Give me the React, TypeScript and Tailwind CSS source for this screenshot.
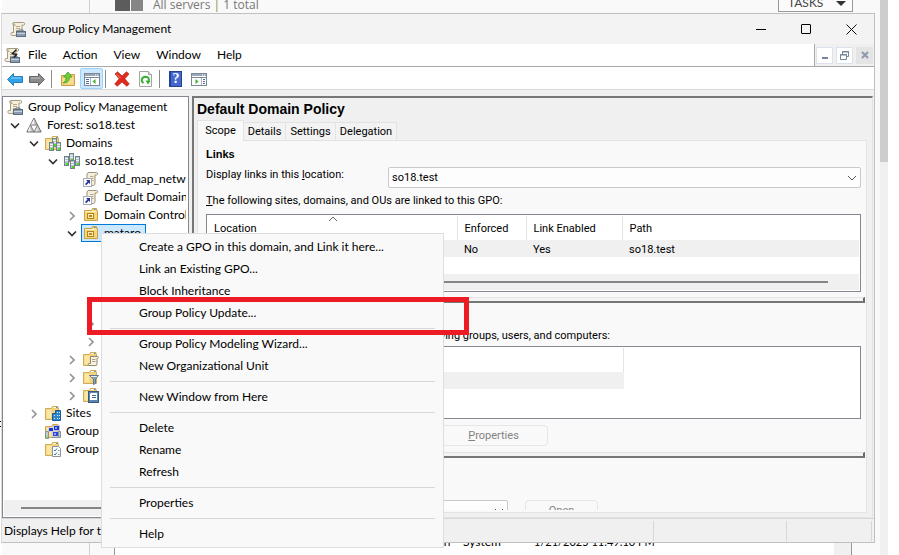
import type { ReactNode } from "react";

const UI = "font-['Lato','Open_Sans',sans-serif]";
const CLASSIC = "font-['Roboto','Liberation_Sans',sans-serif]";
const HEADING = "font-['Liberation_Sans',Arial,sans-serif]";

function Svg({ children, size = "size-4" }: { children: ReactNode; size?: string }) {
  return (
    <svg viewBox="0 0 16 16" className={`${size} shrink-0`} aria-hidden="true">
      {children}
    </svg>
  );
}

function ScrollShape() {
  return (
    <>
      <path d="M4 1.5h9.5c1.4 0 1.8 2.6 0 2.6H12v7.4c0 2-1 3-2.500 3H2.200C.6 14.500.4 11.500 2 11.500h1.500V3z" fill="#f4eedb" stroke="#a39b84" />
      <path d="M4 1.500c-1.800 0-1.800 2.700 0 2.700h1.500" fill="#d9cfae" stroke="#a39b84" />
      <path d="M6 5.500h4M6 7.500h4M6 9.500h3" stroke="#b3aa8c" />
    </>
  );
}

function GpmIcon({ pen = false }: { pen?: boolean }) {
  return (
    <Svg>
      <ScrollShape />
      <rect x="6.500" y="10.500" width="9" height="5" fill="#8b9cb0" stroke="#5d6e81" />
      <path d="M9 10.500V9h4v1.500" fill="none" stroke="#5d6e81" />
      <path d="M7 12.500h8" stroke="#c6d1dc" />
      {pen && <path d="m12.500 2.500-4 4 4 1-2.500 3" fill="none" stroke="#222" strokeWidth="1.500" />}
    </Svg>
  );
}

function ForestIcon() {
  return (
    <Svg>
      <path d="M8 1 .8 15h14.400z" fill="#c4c4c4" stroke="#707070" />
      <path d="M8 2v6H4.700zM4.400 8.500V14.300H1.700z" fill="#f2f2f2" />
      <path d="M11.600 8.500V14.300H9z" fill="#e8e8e8" />
      <path d="M4.400 8h7.200L8 15z" fill="#fafafa" stroke="#7a7a7a" />
    </Svg>
  );
}

function FolderShape() {
  return (
    <>
      <path d="M.5 3.500h6l1-2h5.500v2h.5v11h-13z" fill="#f3d27a" stroke="#cfab55" />
      <path d="M1.500 4.500h5v9h-5z" fill="#fbe6a6" />
      <path d="M8 2.500h4" stroke="#fff8dc" />
      <path d="M11 2.500h1.500" stroke="#4494cf" />
    </>
  );
}

function Tower({ x, y, h }: { x: number; y: number; h: number }) {
  return (
    <>
      <rect x={x + 0.5} y={y + 0.5} width="4" height={h} fill="#b3c2c8" stroke="#71828b" />
      <path d={`M${x + 1} ${y + 2.5}h3M${x + 1} ${y + 4.5}h3`} stroke="#eef3f5" />
      <rect x={x + 2} y={y + h - 2} width="2" height="2" fill="#45e01c" />
    </>
  );
}

function DomainsIcon() {
  return (
    <Svg>
      <FolderShape />
      <Tower x={7} y={3} h={8} />
      <Tower x={4} y={7} h={8} />
      <Tower x={11} y={7} h={8} />
    </Svg>
  );
}

function DomainIcon() {
  return (
    <Svg>
      <Tower x={0} y={3} h={9} />
      <Tower x={11} y={3} h={9} />
      <Tower x={5} y={0} h={8} />
      <Tower x={6} y={7} h={8} />
    </Svg>
  );
}

function GpoLinkIcon() {
  return (
    <Svg>
      <path d="M5 1.500h8.500c1.500 0 1.500 2.500 0 2.500H12v8c0 1.700-1 2.500-2 2.500H4V3z" fill="#f4eedb" stroke="#9b927a" />
      <path d="M7 5.500h3.500M7 7.500h3.500M8 9.500h2.500" stroke="#b3aa8c" />
      <rect x=".5" y="7.500" width="8" height="8" fill="#fff" stroke="#a9adb8" />
      <path d="M3 9h4v4L5.700 11.700 3.200 14.200 2 13l2.500-2.500z" fill="#25359a" />
    </Svg>
  );
}

function OuIcon() {
  return (
    <Svg>
      <path d="M1.500 3.500h7l1-2h4v2h1v10h-13z" fill="#f5d57d" stroke="#c9a248" />
      <path d="M2 4.500h12" stroke="#fff0bd" />
      <path d="M11 2.500h1.500" stroke="#4494cf" />
      <rect x="4.500" y="6.500" width="6" height="5" fill="#fbe9b0" stroke="#b0851f" />
      <rect x="6" y="8" width="3" height="2" fill="#b98a23" />
    </Svg>
  );
}

function GpoFolderIcon() {
  return (
    <Svg>
      <FolderShape />
      <path d="M7.500 5.500h7c1.200 0 1 2 0 2H14v5c0 1.500-.8 2-1.500 2H6c-1.200 0-1-2 0-2h1.500z" fill="#f7f2e2" stroke="#8f8771" />
      <path d="M9 8.500h3.500M9 10.500h3.500" stroke="#aaa184" />
    </Svg>
  );
}

function FilterFolderIcon() {
  return (
    <Svg>
      <FolderShape />
      <path d="M6.500 6.500h9L12.500 10v4.500l-2 1V10z" fill="#8ea6bd" stroke="#5f7790" />
      <path d="M8 7.500h6" stroke="#e3edf5" />
    </Svg>
  );
}

function StarterFolderIcon() {
  return (
    <Svg>
      <FolderShape />
      <rect x="5.500" y="4.500" width="10" height="11" fill="#5b86b3" stroke="#38597f" />
      <path d="M8 6h6v7H7V7z" fill="#fff" />
      <path d="M9 8.500h4M9 10.500h4" stroke="#47688c" />
    </Svg>
  );
}

function SitesIcon() {
  return (
    <Svg>
      <FolderShape />
      <path d="M7.500 8.500h3v-3h5v10h-8z" fill="#2d86c8" stroke="#1a5d96" />
      <path d="M9 10h1v1H9zm0 3h1v1H9zm3-6h1v1h-1zm2 0h1v1h-1zm-2 3h1v1h-1zm2 0h1v1h-1zm-2 3h1v1h-1zm2 0h1v1h-1z" fill="#d6efff" />
    </Svg>
  );
}

function ModelingIcon() {
  return (
    <Svg>
      <FolderShape />
      <rect x="8.500" y="2.500" width="6" height="5" fill="#1e35d6" stroke="#c4c4c4" />
      <rect x="3.500" y="4.500" width="5" height="4" fill="#1e35d6" stroke="#d5d5d5" />
      <rect x="7.500" y="8.500" width="6" height="5" fill="#2a46dd" stroke="#d0d0d0" />
      <path d="M10 4h2v2h-2zM9 10h2v2H9z" fill="#8fa2ff" />
      <path d="M.5 8.500h3v7h-3zM13.500 8.500h2v6h-2zM7 14.500h6" fill="#c5cdd1" stroke="#8a9399" />
      <path d="M1 14h2" stroke="#45e01c" />
    </Svg>
  );
}

function ResultsIcon() {
  return (
    <Svg>
      <FolderShape />
      <path d="M7.500 5.500h6l2 2v8h-8z" fill="#fdfdfd" stroke="#8a929b" />
      <path d="m9 9 1 1 2-2.500M9 13l1 1 2-2.500" fill="none" stroke="#2b78c4" />
      <path d="M13 9.500h1.500M13 13.500h1.500" stroke="#888" />
    </Svg>
  );
}

function ArrowIcon({ forward = false }: { forward?: boolean }) {
  return (
    <Svg>
      {forward ? (
        <path d="M15.500 8.500 9.500 2.500v3h-9v6h9v3z" fill="#8b8b8b" stroke="#666" />
      ) : (
        <path d="m.5 8.500 6-6v3h9v6h-9v3z" fill="#2ea3ea" stroke="#2b7fb8" />
      )}
      <path d={forward ? "M2 7h9" : "M4 7h10"} stroke={forward ? "#c0c0c0" : "#8ed6ff"} />
    </Svg>
  );
}

function UpFolderIcon() {
  return (
    <Svg>
      <path d="M1.500 4.500h6l1-1h6v11h-13z" fill="#f2cd70" stroke="#c9a04a" />
      <path d="M2.500 6.500h11v7h-11z" fill="#f8dc90" />
      <path d="M3 12c2.500-1.500 3-3 3-6H3.500L8 1l4 5H9.500c0 4-2 6-6.500 6z" fill="#6ad03c" stroke="#3a9a20" strokeWidth=".7" />
    </Svg>
  );
}

function PanelIcon({ right = false }: { right?: boolean }) {
  return (
    <Svg>
      <rect x=".5" y="2.500" width="15" height="12" fill="#fff" stroke="#7d8897" />
      <path d="M1 4h14" stroke="#9aa8ba" strokeWidth="2" />
      <path d="M1 6.500h14" stroke="#7d8897" />
      <path d="M11 4h1M13 4h1" stroke="#fff" />
      <path d={right ? "M10.500 7v7" : "M6.500 7v7"} stroke="#aab4c0" />
      <path d={right ? "M12 8.500h2M12 10.500h2M12 12.500h2" : "M2 8.500h3M2 10.500h3M2 12.500h3"} stroke="#4472a8" />
      <path d={right ? "m4.500 8 3 2.500-3 2.500z" : "m11.500 8-3 2.500 3 2.500z"} fill="#3fae28" />
    </Svg>
  );
}

function DeleteIcon() {
  return (
    <Svg>
      <path d="M1 3 3.500.800 8 5l4.500-4.200L15 3l-4.200 4.800L15.300 13 12.800 15.300 8 11l-4.800 4.300L.7 13l4.500-5.200z" fill="#df2a1f" stroke="#b9251d" strokeWidth=".7" />
      <path d="m2.500 3 4 4" stroke="#f78477" />
    </Svg>
  );
}

function RefreshIcon() {
  return (
    <Svg>
      <path d="M1.500.500h9l3 3v12h-12z" fill="#fafafa" stroke="#a5a5a5" />
      <path d="M10.500.500v3h3" fill="#ddd" stroke="#a5a5a5" />
      <path d="M5.500 12c-3-2-2-6 2-6.200 3 0 4.200 2.200 3 4.700" fill="none" stroke="#3cae35" strokeWidth="2" />
      <path d="m7.500 9.500 5 .5-2.500 3.500z" fill="#3cae35" />
    </Svg>
  );
}

function HelpIcon() {
  return (
    <span className="flex h-4 w-[13px] items-center justify-center border border-l-2 border-[#27408f] bg-[#4468cf] font-['Liberation_Serif',serif] text-[14px] leading-none font-bold text-white">
      ?
    </span>
  );
}

function Chevron({ open }: { open: boolean }) {
  return (
    <Svg>
      {open ? (
        <path d="m4 6.500 4 4 4-4" fill="none" stroke="#303030" strokeWidth="1.600" />
      ) : (
        <path d="m6 5 4 4-4 4" fill="none" stroke="#919191" strokeWidth="1.600" />
      )}
    </Svg>
  );
}

const INDENT = ["pl-1", "pl-[3px]", "pl-[22px]", "pl-[41px]", "pl-[60px]", "pl-[79px]"];

type Node = { depth: number; label?: string; icon?: ReactNode; state?: "open" | "closed"; selected?: boolean };

const tree: Node[] = [
  { depth: 0, label: "Group Policy Management", icon: <GpmIcon /> },
  { depth: 1, label: "Forest: so18.test", icon: <ForestIcon />, state: "open" },
  { depth: 2, label: "Domains", icon: <DomainsIcon />, state: "open" },
  { depth: 3, label: "so18.test", icon: <DomainIcon />, state: "open" },
  { depth: 4, label: "Add_map_network", icon: <GpoLinkIcon /> },
  { depth: 4, label: "Default Domain Policy", icon: <GpoLinkIcon /> },
  { depth: 4, label: "Domain Controllers", icon: <OuIcon />, state: "closed" },
  { depth: 4, label: "mataro", icon: <OuIcon />, state: "open", selected: true },
  { depth: 5 },
  { depth: 5 },
  { depth: 5 },
  { depth: 5 },
  { depth: 5, state: "closed" },
  { depth: 5, state: "closed" },
  { depth: 4, icon: <GpoFolderIcon />, state: "closed" },
  { depth: 4, icon: <FilterFolderIcon />, state: "closed" },
  { depth: 4, icon: <StarterFolderIcon />, state: "closed" },
  { depth: 2, label: "Sites", icon: <SitesIcon />, state: "closed" },
  { depth: 2, label: "Group", icon: <ModelingIcon /> },
  { depth: 2, label: "Group", icon: <ResultsIcon /> },
];

function TreeRow({ node }: { node: Node }) {
  return (
    <li className={`flex h-[18px] items-center ${INDENT[node.depth]}`}>
      {node.depth > 0 && <span className="w-4 shrink-0">{node.state && <Chevron open={node.state === "open"} />}</span>}
      <span
        className={`flex h-[18px] items-center gap-[5px] border whitespace-nowrap ${
          node.depth > 0 ? "ml-px pl-px" : "-ml-[2px]"
        } ${node.selected ? "border-[#0078d7] bg-[#cce8ff] pr-1" : "border-transparent"}`}
      >
        {node.icon}
        {node.label}
      </span>
    </li>
  );
}

const menuGroups = [
  ["Create a GPO in this domain, and Link it here...", "Link an Existing GPO...", "Block Inheritance", "Group Policy Update..."],
  ["Group Policy Modeling Wizard...", "New Organizational Unit"],
  ["New Window from Here"],
  ["Delete", "Rename", "Refresh"],
  ["Properties"],
  ["Help"],
];

function ContextMenu() {
  return (
    <div role="menu" className="absolute top-[233px] left-[101px] w-[343px] border border-[#dedede] bg-[#f9f9f9] py-[2px]">
      {menuGroups.map((group, i) => (
        <div key={group[0]}>
          {i > 0 && <hr className="mx-2 my-1 border-[#d7d7d7]" />}
          {group.map((item) => (
            <button key={item} role="menuitem" className="block h-[22px] w-full pl-[37px] text-left">
              {item}
            </button>
          ))}
        </div>
      ))}
    </div>
  );
}

function Splitter() {
  return <div className="mr-px h-[6px] border-t border-r-2 border-b-2 border-t-[#e3e3e3] border-r-[#696969] border-b-[#777] bg-[#f4f4f4]" />;
}

function Divider() {
  return <span className="h-[18px] w-px bg-[#8c8c8c]" />;
}

function ScopePage() {
  return (
    <div className="mr-[5px] mb-1 flex min-h-0 flex-1 flex-col border border-[#e3e3e3] bg-[#f9f9f9] pb-[2px]">
      <div className="min-h-0 flex-1 overflow-hidden">
        <section className="pt-[5px] pr-[5px] pl-2">
          <h2 className={`leading-4 font-bold ${HEADING}`}>Links</h2>
          <div className="mt-[5px] flex items-start">
            <label htmlFor="location" className="w-[182px] leading-4">
              Display links in this <u>l</u>ocation:
            </label>
            <div className="relative flex-1">
              <select id="location" className="block h-[21px] w-full appearance-none rounded-[2px] border border-[#cacaca] bg-[#fdfdfd] pt-px pl-[3px]">
                <option>so18.test</option>
              </select>
              <svg viewBox="0 0 10 6" className="pointer-events-none absolute top-2 right-1 h-[6px] w-[10px]">
                <path d="m1 1 4 4 4-4" fill="none" stroke="#555" />
              </svg>
            </div>
          </div>
          <p className="mt-[5px] leading-4">
            <u>T</u>he following sites, domains, and OUs are linked to this GPO:
          </p>
          <div className="relative mt-[5px] flex h-[78px] flex-col border border-[#828790] bg-white p-px pl-0">
            <svg viewBox="0 0 10 6" className="absolute top-px left-[121px] h-[6px] w-[10px]">
              <path d="m1 5 4-4 4 4" fill="none" stroke="#666" />
            </svg>
            <table className="w-full table-fixed border-collapse text-left">
              <colgroup>
                <col className="w-[250px]" />
                <col className="w-[69px]" />
                <col className="w-[96px]" />
                <col />
              </colgroup>
              <thead>
                <tr className="h-6">
                  <th className="border-r border-[#e3e3e3] px-[7px] pt-[2px] font-normal">Location</th>
                  <th className="border-r border-[#e3e3e3] px-[7px] pt-[2px] font-normal">Enforced</th>
                  <th className="border-r border-[#e3e3e3] px-[7px] pt-[2px] font-normal">Link Enabled</th>
                  <th className="px-[7px] pt-[2px] font-normal">Path</th>
                </tr>
              </thead>
              <tbody className="leading-[14px]">
                <tr className="h-[17px] bg-[#f0f0f0]">
                  <td />
                  <td className="px-[7px] pt-[2px]">No</td>
                  <td className="px-[7px] pt-[2px]">Yes</td>
                  <td className="px-[7px] pt-[2px]">so18.test</td>
                </tr>
              </tbody>
            </table>
            <div className="mt-auto flex h-4 items-center bg-[#f0f0f0] pr-[31px] pl-4">
              <div className="h-[2px] flex-1 bg-[#868686]" />
            </div>
          </div>
        </section>
        <div className="mt-[5px]">
          <Splitter />
        </div>
        <section className="pt-[25px] pr-[5px] pl-2">
          <p className="flex w-[404px] justify-end leading-4 whitespace-nowrap">
            The settings in this GPO can only apply to the following groups, users, and computers:
          </p>
          <div className="mt-[2px] h-[73px] border border-[#828790] bg-white">
            <div className="mt-px h-6 w-[417px] border-r border-[#e3e3e3]" />
            <div className="h-[17px] w-[417px] bg-[#f0f0f0]" />
          </div>
          <div className="mt-[6px] flex pl-[233px]">
            <button disabled className="h-[21px] w-[109px] rounded-[4px] border border-[#e6e6e6] pt-px text-[#838383]">
              <u>P</u>roperties
            </button>
          </div>
        </section>
        <div className="mt-[6px]">
          <Splitter />
        </div>
        <section className="flex gap-[17px] pt-[42px] pl-2">
          <div className="relative w-[302px]">
            <select aria-label="WMI filter" className="block h-[21px] w-full appearance-none rounded-[2px] border border-[#cacaca] bg-[#fdfdfd]" />
            <svg viewBox="0 0 10 6" className="pointer-events-none absolute top-2 right-1 h-[6px] w-[10px]">
              <path d="m1 1 4 4 4-4" fill="none" stroke="#555" />
            </svg>
          </div>
          <button disabled className="h-[21px] w-[73px] rounded-[4px] border border-[#e6e6e6] pt-px text-[#838383]">
            Open
          </button>
        </section>
      </div>
    </div>
  );
}

function DetailPane() {
  return (
    <main className={`flex min-w-0 flex-1 flex-col border-t-2 border-r border-b border-l-2 border-t-[#777] border-r-[#e3e3e3] border-b-[#e3e3e3] border-l-[#777] bg-[#f0f0f0] pl-[3px] text-[11px] ${CLASSIC}`}>
      <h1 className={`h-[22px] text-[14px] leading-[22px] font-bold ${HEADING}`}>Default Domain Policy</h1>
      <div role="tablist" className="-mb-px flex h-[21px] items-end">
        <button role="tab" aria-selected="true" className="relative h-[21px] w-[47px] border border-b-0 border-[#e3e3e3] bg-[#f9f9f9]">
          Scope
        </button>
        <button role="tab" className="h-[19px] w-[42px] border border-l-0 border-[#e3e3e3] bg-[#f3f3f3] pt-px">
          Details
        </button>
        <button role="tab" className="h-[19px] w-[50px] border border-l-0 border-[#e3e3e3] bg-[#f3f3f3] pt-px">
          Settings
        </button>
        <button role="tab" className="h-[19px] w-[61px] border border-l-0 border-[#e3e3e3] bg-[#f3f3f3] pt-px">
          Delegation
        </button>
      </div>
      <ScopePage />
    </main>
  );
}

function TitleBar() {
  return (
    <header className="flex h-[30px] shrink-0 items-center bg-[#f3f3f3] pr-[17px] pl-2">
      <GpmIcon />
      <span className="ml-[6px] flex-1">Group Policy Management</span>
      <div className="flex items-center gap-[35px]">
        <button aria-label="Minimize" className="h-px w-[10px] bg-black" />
        <button aria-label="Maximize" className="size-[10px] rounded-[1px] border border-black" />
        <button aria-label="Close">
          <svg viewBox="0 0 11 11" className="size-[11px]">
            <path d="m.5.500 10 10m0-10-10 10" stroke="#111" />
          </svg>
        </button>
      </div>
    </header>
  );
}

function MenuBar() {
  return (
    <nav className="flex h-[23px] shrink-0 items-stretch border-b border-[#a9a9a9] bg-white">
      <div className="flex flex-1 items-center gap-4 border-r border-[#a9a9a9] pl-[2px]">
        <span className="-mr-2">
          <GpmIcon pen />
        </span>
        {["File", "Action", "View", "Window", "Help"].map((m) => (
          <button key={m}>{m}</button>
        ))}
      </div>
      <div className="flex items-center gap-[3px] bg-[#f0f0f0] pr-px pl-px">
        <button aria-label="Minimize child" className="flex h-[17px] w-[17px] items-end justify-center border border-[#dde3ec] bg-white pb-1">
          <span className="h-[2px] w-[6px] bg-[#75859b]" />
        </button>
        <button aria-label="Restore child" className="flex h-[17px] w-[17px] items-center justify-center border border-[#dde3ec] bg-white">
          <svg viewBox="0 0 9 9" className="size-[9px]">
            <path d="M2.500 3V.500h6v5H6.500M2 1h7M.500 3.500h6v5h-6zM0 4h7" fill="none" stroke="#75859b" />
          </svg>
        </button>
        <button aria-label="Close child" className="flex h-[17px] w-[17px] items-center justify-center bg-[#e4e4e4]">
          <svg viewBox="0 0 8 8" className="size-2">
            <path d="m1 1 6 6m0-6L1 7" stroke="#8b99aa" strokeWidth="2" />
          </svg>
        </button>
      </div>
    </nav>
  );
}

function Toolbar() {
  return (
    <div className="flex h-[23px] shrink-0 items-center border-b border-[#dadada] bg-white pt-px pl-[5px]">
      <div className="flex items-center gap-[6px]">
        <button aria-label="Back"><ArrowIcon /></button>
        <button aria-label="Forward"><ArrowIcon forward /></button>
        <Divider />
      </div>
      <div className="ml-2 flex items-center gap-1">
        <button aria-label="Up one level"><UpFolderIcon /></button>
        <button aria-label="Show console tree" className="flex h-[21px] w-[23px] items-center justify-center rounded-[2px] border border-[#99d1ff] bg-[#cce8ff]">
          <PanelIcon />
        </button>
      </div>
      <div className="ml-[2px] flex items-center gap-2">
        <Divider />
        <button aria-label="Delete"><DeleteIcon /></button>
        <button aria-label="Refresh"><RefreshIcon /></button>
      </div>
      <div className="ml-[5px] flex items-center gap-[9px]">
        <Divider />
        <button aria-label="Help"><HelpIcon /></button>
        <button aria-label="Show action pane"><PanelIcon right /></button>
      </div>
    </div>
  );
}

function Backdrop() {
  return (
    <div className="flex h-full bg-white">
      <div className="flex w-[2px] flex-col pt-[421px]">
        <span className="h-[6px] border border-l-0 border-black" />
      </div>
      <div className="w-[88px] border-r border-[#cfcfcf] bg-[#f9f9f9]" />
      <div className="flex min-w-0 flex-1 flex-col justify-between bg-[#f9f9f9]">
        <div className="flex h-[13px] items-start pr-[27px] pl-[25px]">
          <span className="h-[11px] w-[15px] bg-[#5c5c5c]" />
          <span className="ml-px h-[11px] w-[12px] bg-[#868686]" />
          <span className={`-mt-1 ml-[10px] flex-1 text-[12px] leading-[18px] text-[#777] font-['Open_Sans','Noto_Sans',sans-serif]`}>
            All servers <span className="text-[#8a8a45]">|</span> 1 total
          </span>
          <button className="-mt-[6px] flex h-[18px] w-[75px] items-center justify-between border border-[#999] bg-[#fbfbfb] pr-[6px] pl-[9px] text-[12px] text-[#444]">
            TASKS
            <span className="border-x-[5px] border-t-[5px] border-x-transparent border-t-[#333]" />
          </button>
        </div>
        <div className="flex h-[21px] pr-7 pl-6">
          <div className="flex flex-1 border-l border-[#999] bg-white pl-[322px] leading-4 text-black">
            <span className="w-[26px]">on</span>
            <span className="w-[71px]">System</span>
            <span className="text-[11px]">1/21/2025 11:49:10 PM</span>
          </div>
          <div className="w-[18px] border-r border-[#999] bg-[#f0f0f0]" />
        </div>
      </div>
      <div className="w-2 bg-[#f0f0f0]">
        <div className="h-[162px] bg-[#cdcdcd]" />
      </div>
      <div className="w-[11px]" />
    </div>
  );
}

export default function App() {
  return (
    <div className={`relative h-screen overflow-hidden text-[12px] text-black ${UI}`}>
      <Backdrop />
      <div className="absolute top-[13px] right-6 bottom-3 left-px flex flex-col border border-[#c0c0c0] border-l-[#dadada] bg-[#f0f0f0]">
        <TitleBar />
        <MenuBar />
        <Toolbar />
        <div className="flex min-h-0 flex-1 gap-[3px] pt-[6px] pr-px">
          <aside className="flex w-[187px] shrink-0 flex-col border border-[#828790] bg-white pt-px pr-[2px] pb-px pl-px">
            <ul className="min-h-0 flex-1 overflow-hidden">
              {tree.map((node, i) => (
                <TreeRow key={i} node={node} />
              ))}
            </ul>
            <div className="flex h-4 shrink-0 items-center bg-[#f0f0f0] pl-[17px]">
              <div className="h-[2px] w-[120px] bg-[#868686]" />
            </div>
          </aside>
          <DetailPane />
        </div>
        <footer className="flex h-6 shrink-0 items-center border-t border-[#d7d7d7] pr-[2px]">
          <span className="flex-1 pl-[2px]">Displays Help for the current selection.</span>
          <span className="h-5 w-[133px] border-l border-[#d7d7d7]" />
          <span className="h-5 w-[86px] border-x border-[#d7d7d7]" />
        </footer>
      </div>
      <ContextMenu />
      <div className="pointer-events-none absolute top-[297px] left-[87px] h-[38px] w-[382px] border-[5px] border-[#ed1c24]" />
    </div>
  );
}
